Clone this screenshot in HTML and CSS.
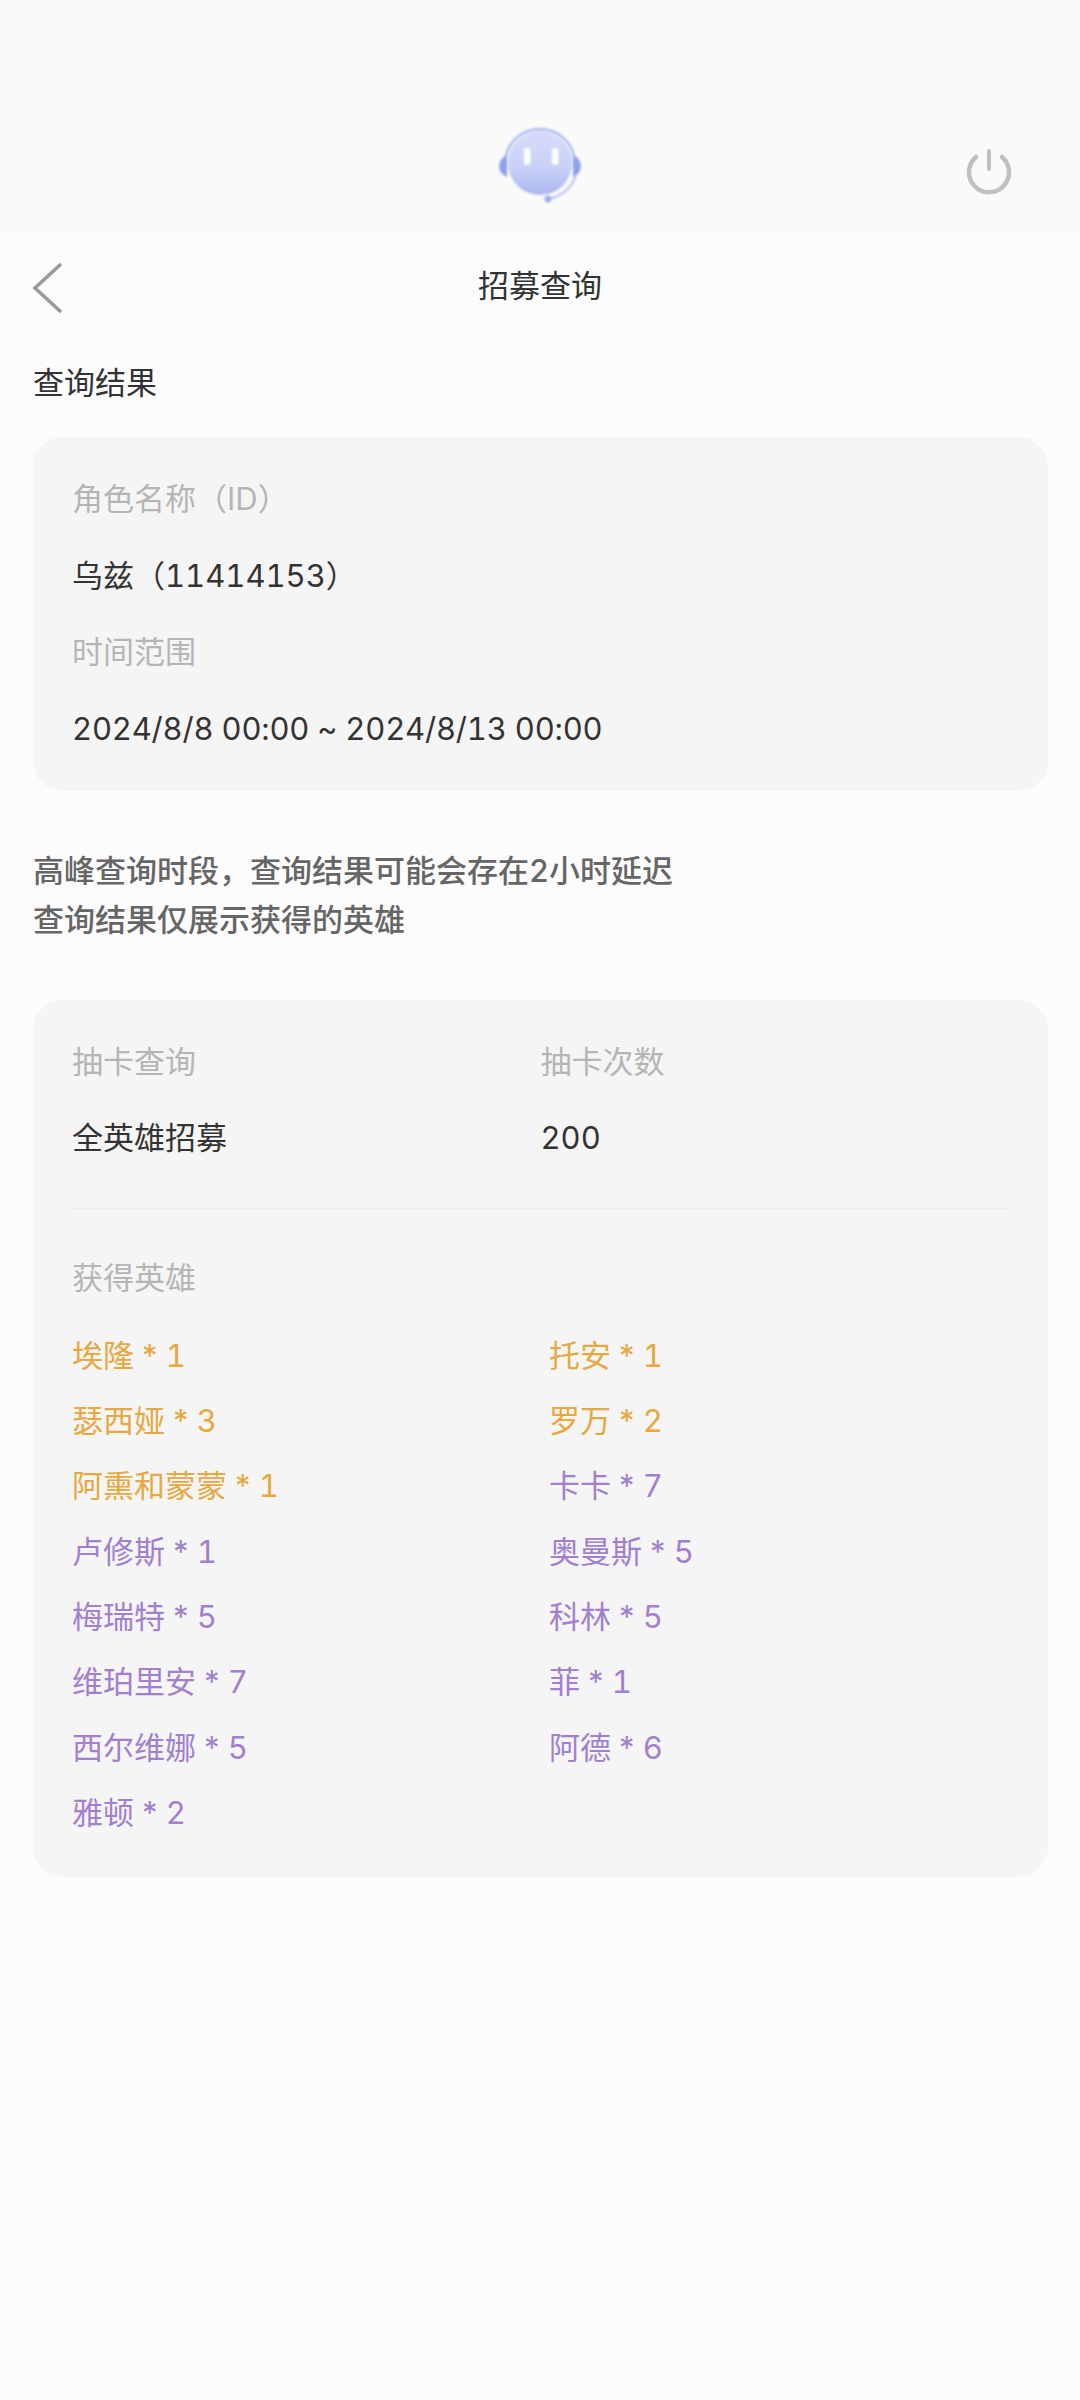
FILE: index.html
```html
<!DOCTYPE html>
<html lang="zh-CN">
<head>
  <meta charset="UTF-8">
  <title>招募查询</title>
  <link rel="stylesheet" href="styles.css">
</head>
<body>
  <header class="top-bar">
    <svg class="avatar" width="88" height="84" viewBox="0 0 88 84">
      <defs>
        <linearGradient id="face" x1="0" y1="0" x2="0" y2="1">
          <stop offset="0" stop-color="#d6dcf9"/>
          <stop offset="0.55" stop-color="#c9d1f6"/>
          <stop offset="1" stop-color="#abb7ee"/>
        </linearGradient>
      </defs>
      <path d="M11 29 C1 33 0 47 11 51 Z" fill="#8ea2ec"/>
      <path d="M77 29 C87 33 88 47 77 51 Z" fill="#8ea2ec"/>
      <circle cx="44" cy="37" r="32" fill="url(#face)"/>
      <path d="M10 30 C14 12 30 3 44 3 C58 3 74 12 78 30" fill="none" stroke="#aebbf0" stroke-width="2.5"/>
      <path d="M80 50 C74 64 64 71 52 73" fill="none" stroke="#b8c3f0" stroke-width="2"/>
      <circle cx="52" cy="73" r="3.5" fill="#9cacee"/>
      <rect x="28" y="22" width="6.5" height="17" rx="3" fill="#fff"/>
      <rect x="56" y="22" width="6.5" height="17" rx="3" fill="#fff"/>
    </svg>
    <svg class="power" width="48" height="48" viewBox="0 0 48 48">
      <path d="M11 10 A20 20 0 1 0 37 10" fill="none" stroke="#c0c0c0" stroke-width="4.5" stroke-linecap="round"/>
      <path d="M24 4 V22" fill="none" stroke="#c0c0c0" stroke-width="4" stroke-linecap="round"/>
    </svg>
  </header>

  <nav class="title-bar">
    <svg class="back" width="32" height="52" viewBox="0 0 32 52">
      <path d="M29 2 L3 26 L29 50" fill="none" stroke="#999" stroke-width="3.5"/>
    </svg>
    <div class="page-title">招募查询</div>
  </nav>

  <main class="content">
    <h2 class="section-title">查询结果</h2>

    <section class="card info-card">
      <div class="label">角色名称（ID）</div>
      <div class="value">乌兹（11414153）</div>
      <div class="label">时间范围</div>
      <div class="value date-range">2024/8/8 00:00 ~ 2024/8/13 00:00</div>
    </section>

    <p class="notice">高峰查询时段，查询结果可能会存在2小时延迟<br>查询结果仅展示获得的英雄</p>

    <section class="card result-card">
      <div class="summary">
        <div class="summary-col">
          <div class="label">抽卡查询</div>
          <div class="value">全英雄招募</div>
        </div>
        <div class="summary-col">
          <div class="label">抽卡次数</div>
          <div class="value">200</div>
        </div>
      </div>
      <div class="divider"></div>
      <div class="label">获得英雄</div>
      <ul class="hero-list">
        <li class="gold">埃隆 * 1</li>
        <li class="gold">托安 * 1</li>
        <li class="gold">瑟西娅 * 3</li>
        <li class="gold">罗万 * 2</li>
        <li class="gold">阿熏和蒙蒙 * 1</li>
        <li class="purple">卡卡 * 7</li>
        <li class="purple">卢修斯 * 1</li>
        <li class="purple">奥曼斯 * 5</li>
        <li class="purple">梅瑞特 * 5</li>
        <li class="purple">科林 * 5</li>
        <li class="purple">维珀里安 * 7</li>
        <li class="purple">菲 * 1</li>
        <li class="purple">西尔维娜 * 5</li>
        <li class="purple">阿德 * 6</li>
        <li class="purple">雅顿 * 2</li>
      </ul>
    </section>
  </main>
</body>
</html>
```

FILE: styles.css
```css
* {
  box-sizing: border-box;
  margin: 0;
  padding: 0;
}
html, body {
  height: 100%;
}
body {
  background: #fcfcfc;
  font-family: Inter, "Noto Sans CJK SC", sans-serif;
  font-size: 31px;
  line-height: 44px;
  color: #333;
  font-feature-settings: "tnum";
}

/* top app bar */
.top-bar {
  position: relative;
  height: 232px;
  background: #fafafa;
  display: flex;
  justify-content: center;
  padding-top: 126px;
}
.avatar {
  filter: blur(0.8px);
}
.power {
  position: absolute;
  top: 147px;
  left: 965px;
  filter: blur(0.6px);
}

.title-bar {
  position: relative;
  height: 108px;
  display: flex;
  align-items: center;
  justify-content: center;
}
.back {
  position: absolute;
  left: 32px;
  top: 30px;
}
.page-title {
  color: #333;
}

.content {
  padding: 0 32px 0 33px;
}
.section-title {
  font-size: 31px;
  font-weight: 400;
  margin-top: 21px;
}

.card {
  background: #f5f5f5;
  border-radius: 30px;
  padding: 40px 39px;
}
.info-card {
  margin-top: 32px;
}
.label {
  color: #b5b5b5;
}
.value {
  margin: 32.5px 0;
}
.date-range {
  letter-spacing: -0.2px;
}
.info-card .value:last-child {
  margin-bottom: 0;
}

.notice {
  margin-top: 55.5px;
  color: #666;
  font-weight: 500;
  line-height: 49px;
}

.result-card {
  margin-top: 55.5px;
  padding-bottom: 31px;
}
.summary {
  display: flex;
}
.summary-col {
  width: 469px;
}
.divider {
  height: 1px;
  background: #ececec;
  margin-top: 15px;
  margin-bottom: 47px;
}
.hero-list {
  list-style: none;
  display: grid;
  grid-template-columns: 477px 1fr;
  grid-auto-rows: 65.4px;
  margin-top: 23px;
}
.hero-list li {
  line-height: 65.4px;
  word-spacing: -2.5px;
}
.gold {
  color: #e6a83f;
}
.purple {
  color: #a27fcf;
}
```
